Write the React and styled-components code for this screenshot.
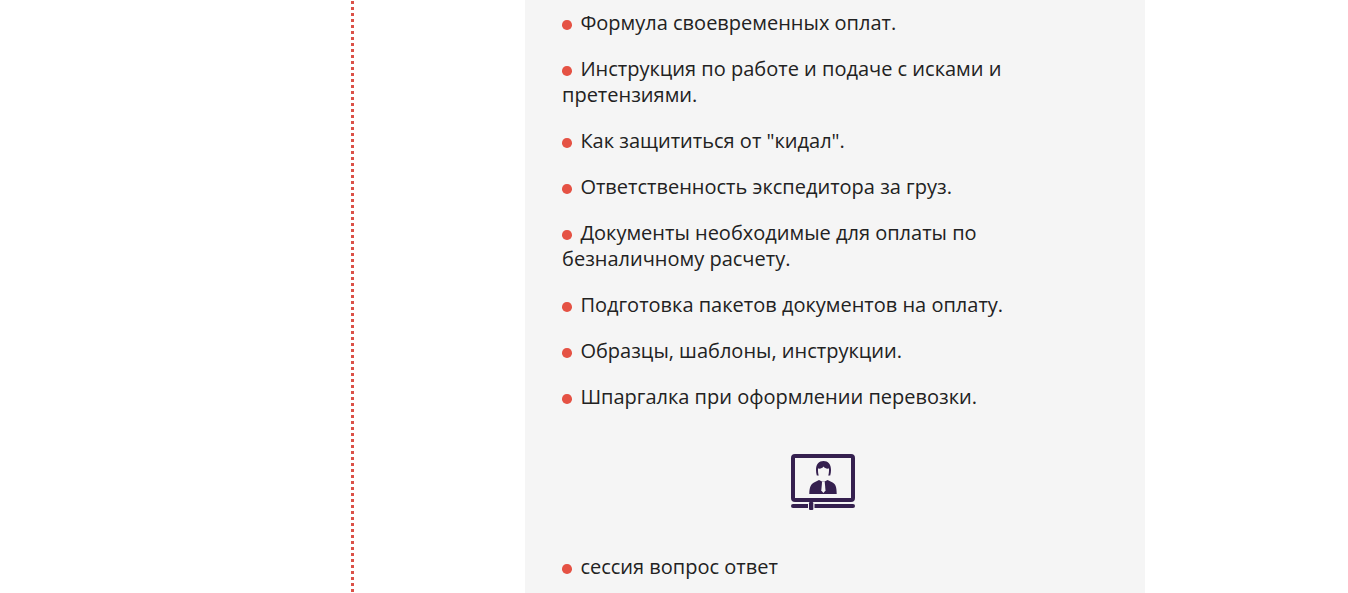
import styled, { createGlobalStyle } from "styled-components";

const GlobalStyle = createGlobalStyle`
  html, body {
    margin: 0;
    padding: 0;
    background: #fff;
  }
`;

const items = [
  "Формула своевременных оплат.",
  "Инструкция по работе и подаче с исками и претензиями.",
  'Как защититься от "кидал".',
  "Ответственность экспедитора за груз.",
  "Документы необходимые для оплаты по безналичному расчету.",
  "Подготовка пакетов документов на оплату.",
  "Образцы, шаблоны, инструкции.",
  "Шпаргалка при оформлении перевозки.",
];

function VideoIcon() {
  return (
    <svg width="64" height="56" viewBox="0 0 64 56" fill="none">
      <rect x="2" y="2" width="60" height="44" rx="2" stroke="#35204f" strokeWidth="4" />
      {/* shoulders */}
      <path
        d="M18.300 40c0-7 1.700-10 4.700-11.500l5-2.500 3 1.500h2.600l3-1.500 5 2.500c3 1.500 4.100 4.500 4.100 11.500z"
        fill="#35204f"
      />
      {/* hair and ears */}
      <path
        d="M25 16c0-6 3-9 7.500-9s7.500 3 7.500 9c0 2-.3 3.500-.8 5.500h-13.400c-.5-2-.8-3.500-.8-5.500z"
        fill="#35204f"
      />
      {/* face */}
      <path
        d="M27 14.500c2.200.5 4.500-.2 5.500-2 1.200 1.800 3.300 2.500 5.500 2 .3 6-1.500 12-5.500 12s-5.800-6-5.500-12z"
        fill="#f5f5f5"
      />
      {/* tie */}
      <path d="M31.100 27.500h2.600l.8 9-2.100 2.500-2.100-2.500z" fill="#f5f5f5" />
      <rect x="0" y="50" width="64" height="4" rx="2" fill="#35204f" />
      <rect x="17" y="49" width="6.500" height="6" fill="#f5f5f5" />
      <rect x="18" y="48" width="4.300" height="8" rx="1" fill="#35204f" />
    </svg>
  );
}

function ListItem({ text }) {
  return (
    <Item>
      <Bullet />
      {text}
    </Item>
  );
}

export default function App() {
  return (
    <Page>
      <GlobalStyle />
      <Rail />
      <Panel>
        {items.map((text) => (
          <ListItem key={text} text={text} />
        ))}
        <IconRow>
          <VideoIcon />
        </IconRow>
        <ListItem text="сессия вопрос ответ" />
      </Panel>
    </Page>
  );
}

const Page = styled.div`
  display: flex;
  height: 593px;
  overflow: hidden;
  padding-left: 351px;
  font-family: "Open Sans", "Liberation Sans", sans-serif;
`;

const Rail = styled.div`
  width: 3px;
  flex: none;
  margin-right: 171px;
  background: repeating-linear-gradient(
    to bottom,
    transparent 0 1px,
    #db5148 1px 4px,
    transparent 4px 6px
  );
`;

const Panel = styled.div`
  width: 620px;
  flex: none;
  box-sizing: border-box;
  padding: 10px 61px 0 37px;
  background: #f5f5f5;
`;

const Item = styled.p`
  margin: 0 0 20px;
  font-size: 20px;
  line-height: 26px;
  color: #222;
`;

const Bullet = styled.span`
  display: inline-block;
  width: 9.600px;
  height: 9.600px;
  margin-right: 8.800px;
  border-radius: 50%;
  background: #e55244;
  vertical-align: 0.500px;
`;

const IconRow = styled.div`
  display: flex;
  justify-content: center;
  margin: 44px 0 44px;
`;
